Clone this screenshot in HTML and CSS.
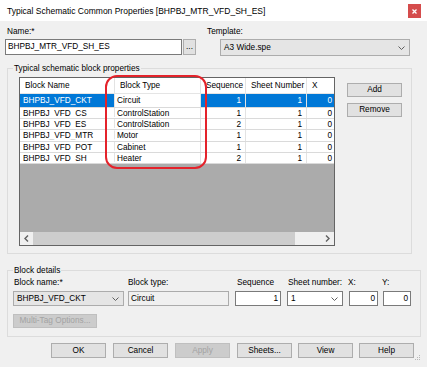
FILE: index.html
```html
<!DOCTYPE html>
<html lang="en">
<head>
<meta charset="utf-8">
<title>Typical Schematic Common Properties</title>
<link rel="stylesheet" href="styles.css">
</head>
<body>
<div class="dialog">
  <div class="titlebar">
    <span class="title">Typical Schematic Common Properties [BHPBJ_MTR_VFD_SH_ES]</span>
    <span class="close"><svg width="5" height="5" viewBox="0 0 5 5"><path d="M0.5 0.5L4.5 4.5M4.5 0.5L0.5 4.5" stroke="#fff" stroke-width="1.3"/></svg></span>
  </div>

  <div class="top">
    <div class="name-col">
      <div class="lbl name-lbl">Name:*</div>
      <div class="name-row">
        <div class="textbox name-box">BHPBJ_MTR_VFD_SH_ES</div>
        <div class="btn browse">...</div>
      </div>
    </div>
    <div class="tpl-col">
      <div class="lbl">Template:</div>
      <div class="combo tpl-combo"><span>A3 Wide.spe</span><svg class="chev" width="7" height="4" viewBox="0 0 7 4"><path d="M0.5 0.5L3.5 3.5L6.5 0.5" fill="none" stroke="#5f5f5f" stroke-width="1"/></svg></div>
    </div>
  </div>

  <fieldset class="group grp1">
    <legend>Typical schematic block properties</legend>
    <div class="grp1-body">
      <div class="grid">
        <div class="hdr">
          <div class="c c1">Block Name</div>
          <div class="c c2">Block Type</div>
          <div class="c c3">Sequence</div>
          <div class="c c4">Sheet Number</div>
          <div class="c c5">X</div>
        </div>
        <div class="row first sel">
          <div class="c c1">BHPBJ_VFD_CKT</div>
          <div class="c c2 cur">Circuit</div>
          <div class="c c3 num">1</div>
          <div class="c c4 num">1</div>
          <div class="c c5 num">0</div>
        </div>
        <div class="row">
          <div class="c c1">BHPBJ_VFD_CS</div>
          <div class="c c2">ControlStation</div>
          <div class="c c3 num">1</div>
          <div class="c c4 num">1</div>
          <div class="c c5 num">0</div>
        </div>
        <div class="row">
          <div class="c c1">BHPBJ_VFD_ES</div>
          <div class="c c2">ControlStation</div>
          <div class="c c3 num">2</div>
          <div class="c c4 num">1</div>
          <div class="c c5 num">0</div>
        </div>
        <div class="row">
          <div class="c c1">BHPBJ_VFD_MTR</div>
          <div class="c c2">Motor</div>
          <div class="c c3 num">1</div>
          <div class="c c4 num">1</div>
          <div class="c c5 num">0</div>
        </div>
        <div class="row">
          <div class="c c1">BHPBJ_VFD_POT</div>
          <div class="c c2">Cabinet</div>
          <div class="c c3 num">1</div>
          <div class="c c4 num">1</div>
          <div class="c c5 num">0</div>
        </div>
        <div class="row">
          <div class="c c1">BHPBJ_VFD_SH</div>
          <div class="c c2">Heater</div>
          <div class="c c3 num">2</div>
          <div class="c c4 num">1</div>
          <div class="c c5 num">0</div>
        </div>
        <div class="empty"></div>
        <div class="hscroll">
          <div class="arrow"><svg width="5" height="7" viewBox="0 0 5 7"><path d="M4 0.5L1 3.5L4 6.5" fill="none" stroke="#606060" stroke-width="1.4"/></svg></div>
          <div class="thumb"></div>
          <div class="track"></div>
          <div class="arrow"><svg width="5" height="7" viewBox="0 0 5 7"><path d="M1 0.5L4 3.5L1 6.5" fill="none" stroke="#606060" stroke-width="1.4"/></svg></div>
        </div>
      </div>
      <div class="side">
        <div class="btn side-btn">Add</div>
        <div class="btn side-btn">Remove</div>
      </div>
    </div>
  </fieldset>

  <fieldset class="group grp2">
    <legend>Block details</legend>
    <div class="details">
      <div class="fields">
        <div class="field f1">
          <div class="lbl">Block name:*</div>
          <div class="combo bn-combo"><span>BHPBJ_VFD_CKT</span><svg class="chev" width="7" height="4" viewBox="0 0 7 4"><path d="M0.5 0.5L3.5 3.5L6.5 0.5" fill="none" stroke="#5f5f5f" stroke-width="1"/></svg></div>
        </div>
        <div class="field f2">
          <div class="lbl">Block type:</div>
          <div class="textbox ro bt-box">Circuit</div>
        </div>
        <div class="field f3">
          <div class="lbl">Sequence</div>
          <div class="textbox numbox">1</div>
        </div>
        <div class="field f4">
          <div class="lbl">Sheet number:</div>
          <div class="combo edit sn-combo"><span>1</span><svg class="chev" width="7" height="4" viewBox="0 0 7 4"><path d="M0.5 0.5L3.5 3.5L6.5 0.5" fill="none" stroke="#5f5f5f" stroke-width="1"/></svg></div>
        </div>
        <div class="field f5">
          <div class="lbl">X:</div>
          <div class="textbox numbox">0</div>
        </div>
        <div class="field f6">
          <div class="lbl">Y:</div>
          <div class="textbox numbox">0</div>
        </div>
      </div>
      <div class="btn disabled multi">Multi-Tag Options...</div>
    </div>
  </fieldset>

  <div class="buttons">
    <div class="btn b-ok">OK</div>
    <div class="btn b-cancel">Cancel</div>
    <div class="btn disabled b-apply">Apply</div>
    <div class="btn b-sheets">Sheets...</div>
    <div class="btn b-view">View</div>
    <div class="btn b-help">Help</div>
  </div>

  <div class="annot"></div>
  <svg class="grip" width="6" height="6" viewBox="0 0 6 6"><rect x="4" y="0" width="1" height="1" fill="#b8b8b8"/><rect x="2" y="2" width="1" height="1" fill="#b8b8b8"/><rect x="4" y="2" width="1" height="1" fill="#b8b8b8"/><rect x="0" y="4" width="1" height="1" fill="#b8b8b8"/><rect x="2" y="4" width="1" height="1" fill="#b8b8b8"/><rect x="4" y="4" width="1" height="1" fill="#b8b8b8"/></svg>
</div>
</body>
</html>
```

FILE: styles.css
```css
* { box-sizing: border-box; }
html, body { margin: 0; padding: 0; }
body {
  width: 427px; height: 367px; overflow: hidden;
  background: #f0f0f0;
  font-family: "Liberation Sans", Arial, sans-serif;
  font-size: 8.25px; color: #000;
}
.dialog { position: relative; width: 427px; height: 367px; }

/* title bar */
.titlebar { height: 21px; background: #fff; display: flex; align-items: flex-start; }
.title { font-size: 8.5px; line-height: 10px; margin: 6px 0 0 7px; white-space: nowrap; }
.close {
  margin: 4px 6px 0 auto; width: 13px; height: 14px;
  background: #d54c4c; display: flex; align-items: center; justify-content: center;
}

/* top fields */
.top { display: flex; margin-top: 6px; }
.name-col { margin-left: 5px; }
.lbl { line-height: 10px; height: 10px; white-space: nowrap; }
.name-lbl { padding-left: 2px; }
.name-row { display: flex; margin-top: 2px; }
.textbox {
  background: #fff; border: 1px solid #7a7a7a; height: 16px;
  line-height: 14px; padding: 0 2px; white-space: nowrap; overflow: hidden;
}
.name-box { width: 177px; }
.btn {
  background: #e1e1e1; border: 1px solid #adadad;
  display: flex; align-items: center; justify-content: center;
  white-space: nowrap; line-height: 10px;
}
.btn.disabled { background: #cccccc; border-color: #bfbfbf; color: #a3a3a3; }
.browse { width: 13px; height: 16px; margin-left: 1px; align-items: flex-end; padding-bottom: 2px; }
.tpl-col { margin-left: 11px; }
.combo {
  display: flex; align-items: center; justify-content: space-between;
  padding: 0 4px 0 3px; border: 1px solid #acacac; background: #e5e5e5; white-space: nowrap;
}
.combo.edit { background: #fff; border-color: #7a7a7a; }
.chev { flex: none; }
.tpl-combo { margin: 2px 0 0 13px; width: 190px; height: 17px; }

/* group boxes */
.group { margin: 0; padding: 0; border: 1px solid #dcdcdc; min-width: 0; }
.group legend { margin-left: 5px; padding: 0 1px; line-height: 11px; }
.grp1 { margin: 7px 0 0 7px; width: 405px; }
.grp1-body { display: flex; align-items: flex-start; padding: 3px 0 7px 11px; }

/* grid */
.grid {
  width: 316px; height: 169px; border: 1px solid #646464; background: #ababab;
  display: flex; flex-direction: column; overflow: hidden; flex: none;
}
.hdr, .row { display: flex; flex: none; }
.hdr { height: 16px; background: #fff; border-bottom: 1px solid #e5e5e5; }
.c { overflow: hidden; white-space: nowrap; border-right: 1px solid #e3e3e3; flex: none; }
.c1 { width: 95px; }
.c2 { width: 86px; }
.c3 { width: 45px; }
.c4 { width: 61px; }
.c5 { width: 27px; border-right: 0; }
.hdr .c { padding-left: 5px; line-height: 15px; }
.row { background: #fff; border-bottom: 1px solid #dadada; height: 11.2px; }
.row.first { height: 14px; }
.row .c { line-height: 10.2px; padding: 1px 3px 0 3px; }
.row:not(.first) .c1 { clip-path: inset(0 0 1.3px 0); }
.row.first .c { line-height: 13px; padding-top: 0; }
.row .c2 { padding-left: 2px; }
.row .num { text-align: right; padding-right: 4px; }
.row .c5 { padding-right: 2px; }
.row.sel { background: #0078d7; color: #fff; }
.row.sel .cur { background: #fff; color: #000; }
.empty { flex: 1; background: #ababab; }
.hscroll { height: 13px; flex: none; display: flex; background: #f0f0f0; }
.arrow { width: 13px; display: flex; align-items: center; justify-content: center; }
.thumb { width: 262px; background: #cdcdcd; }
.track { flex: 1; }

.side { margin-left: 12px; padding-top: 6px; display: flex; flex-direction: column; gap: 6px; }
.side-btn { width: 55px; height: 14px; }

/* block details */
.grp2 { margin: 11px 0 0 7px; width: 414px; }
.details { padding: 2px 0 8px 5px; }
.fields { display: flex; align-items: flex-start; }
.field { display: flex; flex-direction: column; flex: none; }
.f1 { width: 111px; }
.f2 { width: 101px; margin-left: 4px; }
.f3 { width: 46px; margin-left: 6px; }
.f4 { width: 56px; margin-left: 6px; }
.f5 { width: 29px; margin-left: 6px; }
.f6 { width: 28px; margin-left: 5px; }
.f1 .lbl { padding-left: 1px; }
.f3 .lbl { padding-left: 2px; }
.f4 .lbl { padding-left: 1px; }
.f5 .lbl, .f6 .lbl { margin-left: -1px; }
.bn-combo { margin-top: 3px; height: 15px; padding-left: 3px; }
.bt-box { margin-top: 3px; height: 15px; line-height: 13px; background: #f0f0f0; border-color: #ababab; }
.numbox { margin-top: 3px; height: 15px; line-height: 13px; text-align: right; }
.sn-combo { margin-top: 3px; height: 15px; }
.multi { width: 84px; height: 14px; margin-top: 8px; }

/* bottom buttons */
.buttons { display: flex; margin-top: 6px; }
.buttons .btn { height: 15px; width: 55px; }
.b-ok { margin-left: 51px; }
.b-cancel, .b-apply, .b-sheets { margin-left: 7px; }
.b-view, .b-help { margin-left: 6px; }

/* overlays */
.annot {
  position: absolute; left: 105px; top: 75px; width: 102px; height: 94px;
  border: 2px solid #e4232b; border-radius: 12px;
}
.grip { position: absolute; left: 415px; top: 355px; }
```
